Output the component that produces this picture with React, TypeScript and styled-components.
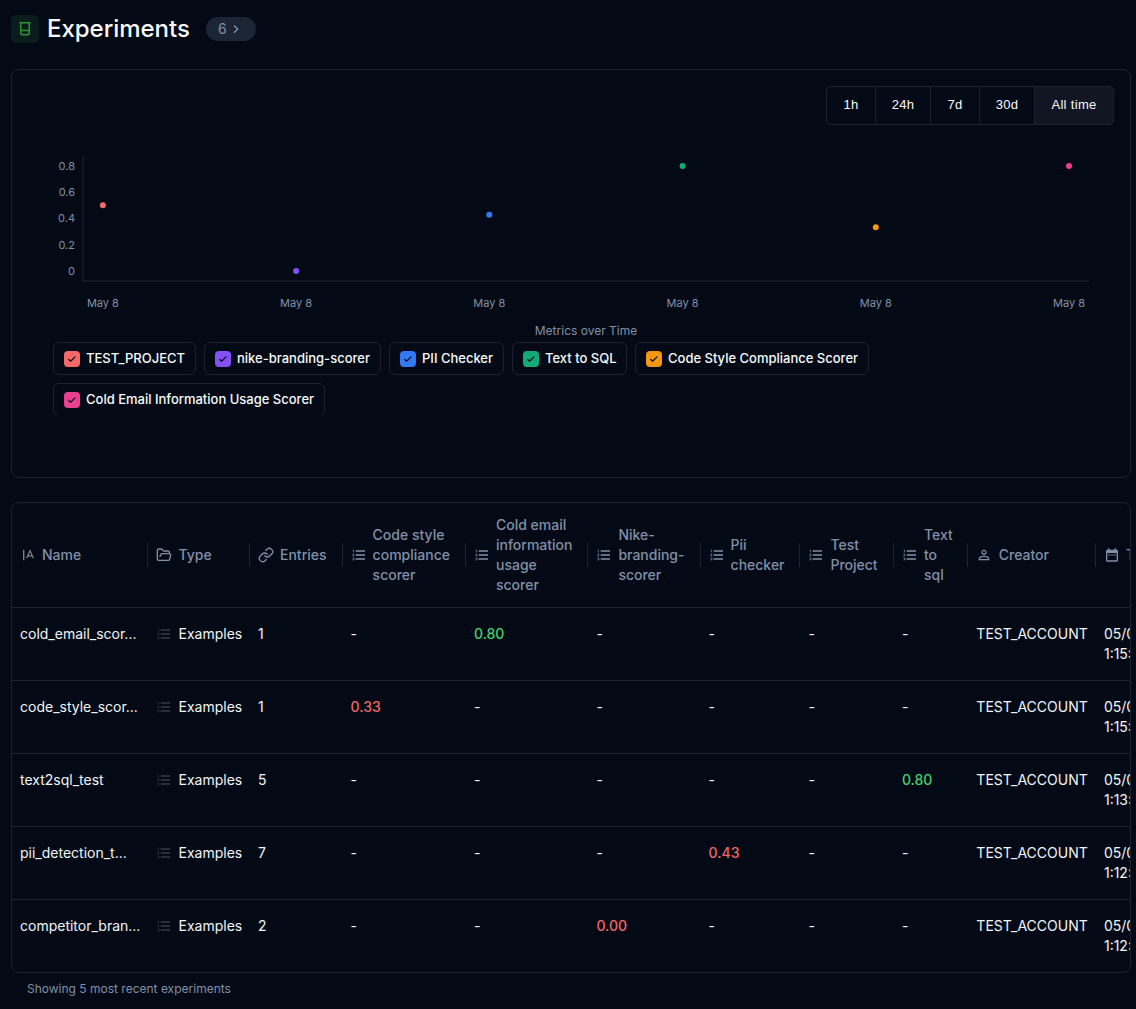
import React from "react";
import styled, { createGlobalStyle } from "styled-components";
import { MdFormatListNumbered, MdPersonOutline, MdDateRange } from "react-icons/md";
import { FolderOpen, Link } from "lucide-react";

const line = "#1c222e";
const muted = "#8190a8";
const canvas = "#040a15";

const Global = createGlobalStyle`
  * { box-sizing: border-box; }
  body { margin: 0; background: ${canvas}; color: #f8fafc; font-family: Inter, sans-serif; font-size: 14px; line-height: 20px; }
  svg { display: block; flex: none; }
`;

const Page = styled.main`
  width: 1136px;
  height: 1009px;
  padding: 14px 5px 0 11px;
  overflow: hidden;
  background: ${canvas};
`;
const Header = styled.header`
  display: flex;
  align-items: center;
  height: 30px;
`;
const Badge = styled.div`
  display: grid;
  place-items: center;
  width: 28px;
  height: 28px;
  border-radius: 5px;
  background: #0a1c1b;
`;
const Title = styled.h1`
  width: 143px;
  margin: 0 16px 0 8px;
  font-size: 24px;
  line-height: 30px;
  font-weight: 500;
  letter-spacing: -0.03px;
`;
const CountPill = styled.button`
  display: flex;
  align-items: center;
  gap: 3px;
  width: 50px;
  height: 24px;
  padding: 0 0 0 12px;
  border: 0;
  border-radius: 12px;
  background: #1c2533;
  color: ${muted};
  font: 14px/20px Inter, sans-serif;
`;
const Panel = styled.section`
  display: flex;
  flex-direction: column;
  height: 409px;
  margin-top: 25px;
  padding: 16px 16px 0 41px;
  border: 1px solid ${line};
  border-radius: 8px;
`;
const Ranges = styled.div`
  display: flex;
  align-self: flex-end;
  height: 39px;
  border: 1px solid ${line};
  border-radius: 4px;
  overflow: hidden;
`;
const Range = styled.button<{ $width: number; $active?: boolean }>`
  width: ${(p) => p.$width}px;
  padding: 0 0 2px;
  border: 0;
  border-right: ${(p) => (p.$active ? "0" : `1px solid ${line}`)};
  background: ${(p) => (p.$active ? "#111622" : "transparent")};
  color: #f8fafc;
  font: 13px "Liberation Sans", Arial, sans-serif;
  letter-spacing: 0.32px;
`;
const ChartSvg = styled.svg`
  width: 1048px;
  height: 190px;
  margin-top: 25px;
  font: 11px Inter, sans-serif;
`;
const ChartTitle = styled.div`
  height: 17px;
  margin-top: -18px;
  width: 1066px;
  color: ${muted};
  font-size: 12px;
  line-height: 17px;
  text-align: center;
`;
const Legend = styled.div`
  display: flex;
  flex-wrap: wrap;
  align-content: flex-start;
  gap: 8px;
  width: 900px;
  height: 73px;
  margin-top: 3px;
  overflow: hidden;
`;
const LegendItem = styled.label<{ $width: number }>`
  display: flex;
  align-items: center;
  gap: 6px;
  width: ${(p) => p.$width}px;
  height: 33px;
  padding-left: 10px;
  border: 1px solid ${line};
  border-radius: 6px;
  font-size: 13px;
  font-weight: 500;
  white-space: nowrap;
`;
const LegendText = styled.span`
  padding-bottom: 2px;
`;
const Check = styled.span<{ $color: string }>`
  display: grid;
  place-items: center;
  width: 16px;
  height: 16px;
  border-radius: 4px;
  background: ${(p) => p.$color};
`;
const TablePanel = styled.section`
  height: 471px;
  margin-top: 24px;
  border: 1px solid ${line};
  border-radius: 8px;
  overflow: hidden;
`;
const Row = styled.div<{ $head?: boolean }>`
  display: grid;
  grid-template-columns: 136px 102px 92.6px 123.4px 122.4px 112.2px 99.9px 93.5px 74.4px 127.6px 150px;
  width: 1234px;
  height: ${(p) => (p.$head ? 105 : 73)}px;
  border-bottom: 1px solid ${line};
  &:last-child { border-bottom: 0; }
`;
const HeadCell = styled.div<{ $inset: number; $gap: number }>`
  display: flex;
  align-items: center;
  gap: ${(p) => p.$gap}px;
  padding-left: ${(p) => p.$inset}px;
  color: ${muted};
  font-weight: 500;
  background: linear-gradient(${line}, ${line}) right center / 1px 24px no-repeat;
`;
const HeadLabel = styled.span`
  white-space: pre-line;
`;
const Cell = styled.div<{ $color?: string }>`
  display: flex;
  align-items: flex-start;
  gap: 6.5px;
  padding: 16px 0 0 8px;
  color: ${(p) => p.$color || "#f1f5f9"};
  font-weight: ${(p) => (p.$color ? 500 : 400)};
  white-space: pre-line;
`;
const RowIcon = styled.span`
  padding-top: 2px;
  color: #383a3d;
`;
const Footnote = styled.p`
  margin: 7px 0 0 16px;
  color: ${muted};
  font-size: 12px;
  line-height: 18px;
`;

const BeakerIcon = () => (
  <svg width="12" height="16" viewBox="0 0 12 16" fill="none" stroke="#2f9434" strokeWidth="1.5">
    <path d="M.4 1.75h11.2M1.75 1.75v10.1q0 1.9 1.9 1.9h4.7q1.9 0 1.9-1.9V1.75M1.75 9.5h8.5" />
  </svg>
);
const ChevronIcon = () => (
  <svg width="12" height="12" viewBox="0 0 12 12" fill="none" stroke="currentColor" strokeWidth="1.4">
    <path d="m4 2.4 3.7 3.7L4 9.8" />
  </svg>
);
const CheckIcon = () => (
  <svg width="8" height="8" viewBox="0 0 8 8" fill="none" stroke="#0b101a" strokeWidth="1.25" strokeLinecap="round" strokeLinejoin="round">
    <path d="m.8 4.5 1.8 1.7L7 1.9" />
  </svg>
);
const NameIcon = () => (
  <svg width="12" height="12" viewBox="0 0 12 12" fill="none" stroke="#85878a">
    <path d="M1.7 .8v10.4" strokeWidth="1.3" />
    <path d="M4.6 9.2 8 1.7l3.4 7.5M5.8 6.9h4.4" strokeWidth="1.1" />
  </svg>
);

const ranges = [
  { label: "1h", width: 49 },
  { label: "24h", width: 55 },
  { label: "7d", width: 49 },
  { label: "30d", width: 55 },
  { label: "All time", width: 78, active: true },
];
const points = [
  { x: 49.9, y: 55.3, color: "#f96868" },
  { x: 243.1, y: 121, color: "#8250f5" },
  { x: 436.3, y: 64.8, color: "#3478f6" },
  { x: 629.6, y: 16, color: "#12ab75" },
  { x: 822.8, y: 77.2, color: "#f59714" },
  { x: 1016, y: 16, color: "#eb3f91" },
];
const ticks = [["0.8", 16], ["0.6", 42], ["0.4", 68], ["0.2", 95], ["0", 121]] as const;
const series = [
  { name: "TEST_PROJECT", width: 143 },
  { name: "nike-branding-scorer", width: 177 },
  { name: "PII Checker", width: 115 },
  { name: "Text to SQL", width: 115 },
  { name: "Code Style Compliance Scorer", width: 234 },
  { name: "Cold Email Information Usage Scorer", width: 272 },
];

const numbered = <MdFormatListNumbered size={16} />;
const columns = [
  { label: "Name", icon: <NameIcon />, inset: 10, gap: 8 },
  { label: "Type", icon: <FolderOpen size={16} strokeWidth={2} />, inset: 8, gap: 6.5 },
  { label: "Entries", icon: <Link size={16} strokeWidth={2} />, inset: 8, gap: 6 },
  { label: "Code style\ncompliance\nscorer", icon: numbered, inset: 8, gap: 6 },
  { label: "Cold email\ninformation\nusage\nscorer", icon: numbered, inset: 8, gap: 6 },
  { label: "Nike-\nbranding-\nscorer", icon: numbered, inset: 8, gap: 6 },
  { label: "Pii\nchecker", icon: numbered, inset: 8, gap: 6 },
  { label: "Test\nProject", icon: numbered, inset: 8, gap: 6 },
  { label: "Text\nto\nsql", icon: numbered, inset: 8, gap: 6 },
  { label: "Creator", icon: <MdPersonOutline size={16} />, inset: 8, gap: 6.4 },
  { label: "Timestamp", icon: <MdDateRange size={16} />, inset: 8, gap: 6 },
];
const green = "#42d16e";
const red = "#f26565";
const rows = [
  { name: "cold_email_scor...", entries: 1, at: 1, score: "0.80", color: green, time: "05/08/2025\n1:15:42 PM" },
  { name: "code_style_scor...", entries: 1, at: 0, score: "0.33", color: red, time: "05/08/2025\n1:15:10 PM" },
  { name: "text2sql_test", entries: 5, at: 5, score: "0.80", color: green, time: "05/08/2025\n1:13:31 PM" },
  { name: "pii_detection_t...", entries: 7, at: 3, score: "0.43", color: red, time: "05/08/2025\n1:12:50 PM" },
  { name: "competitor_bran...", entries: 2, at: 2, score: "0.00", color: red, time: "05/08/2025\n1:12:14 PM" },
];

export default function App() {
  return (
    <Page>
      <Global />
      <Header>
        <Badge><BeakerIcon /></Badge>
        <Title>Experiments</Title>
        <CountPill>6<ChevronIcon /></CountPill>
      </Header>
      <Panel>
        <Ranges>
          {ranges.map((r) => (
            <Range key={r.label} $width={r.width} $active={r.active}>{r.label}</Range>
          ))}
        </Ranges>
        <ChartSvg viewBox="0 0 1048 190">
          <path d="M30 6v125h1006" fill="none" stroke="#111824" strokeWidth="2" />
          <g fill={muted}>
            {ticks.map(([label, y]) => (
              <text key={label} x="22" y={y + 4} textAnchor="end">{label}</text>
            ))}
            {points.map((p) => (
              <text key={p.x} x={p.x} y="157" textAnchor="middle">May 8</text>
            ))}
          </g>
          {points.map((p) => <circle key={p.x} cx={p.x} cy={p.y} r="3" fill={p.color} />)}
        </ChartSvg>
        <ChartTitle>Metrics over Time</ChartTitle>
        <Legend>
          {series.map((s, i) => (
            <LegendItem key={s.name} $width={s.width}>
              <Check $color={points[i].color}><CheckIcon /></Check>
              <LegendText>{s.name}</LegendText>
            </LegendItem>
          ))}
        </Legend>
      </Panel>
      <TablePanel>
        <Row $head>
          {columns.map((c) => (
            <HeadCell key={c.label} $inset={c.inset} $gap={c.gap}>
              {c.icon}
              <HeadLabel>{c.label}</HeadLabel>
            </HeadCell>
          ))}
        </Row>
        {rows.map((r) => (
          <Row key={r.name}>
            <Cell>{r.name}</Cell>
            <Cell><RowIcon>{numbered}</RowIcon>Examples</Cell>
            <Cell>{r.entries}</Cell>
            {[0, 1, 2, 3, 4, 5].map((i) => (
              <Cell key={i} $color={i === r.at ? r.color : undefined}>{i === r.at ? r.score : "-"}</Cell>
            ))}
            <Cell>TEST_ACCOUNT</Cell>
            <Cell>{r.time}</Cell>
          </Row>
        ))}
      </TablePanel>
      <Footnote>Showing 5 most recent experiments</Footnote>
    </Page>
  );
}
